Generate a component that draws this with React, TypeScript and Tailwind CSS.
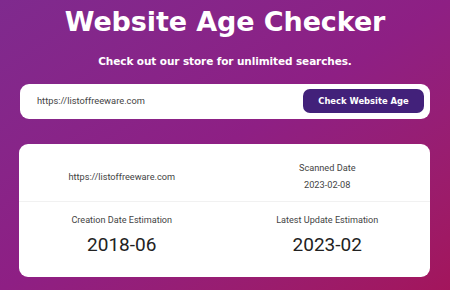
export default function App() {
  return (
    <div className="w-[450px] h-[290px] overflow-hidden bg-gradient-to-br from-[#7f2a8e] via-[#8e1f84] to-[#a3155c] px-[20px] [font-family:Roboto,sans-serif]">
      <h1 className="text-center text-white text-[27px] font-bold leading-none pt-[8px] tracking-[-0.1px] [font-family:'DejaVu_Sans',sans-serif]">
        Website Age Checker
      </h1>
      <p className="text-center text-white text-[10.5px] font-bold mt-[21px] leading-none tracking-[-0.1px] [font-family:'DejaVu_Sans',sans-serif]">
        Check out our store for unlimited searches.
      </p>

      <div className="mt-[17px] h-[35px] bg-white rounded-[9px] flex items-center justify-between pl-[17px] pr-[6px]">
        <span className="text-[9.3px] text-[#444]">https://listoffreeware.com</span>
        <button className="h-[24px] w-[121px] rounded-[7px] bg-[#42217a] text-white text-[8.4px] font-bold [font-family:'DejaVu_Sans',sans-serif]">
          Check Website Age
        </button>
      </div>

      <div className="mt-[25px] -ml-[1px] h-[133px] bg-white rounded-[9px] flex flex-col text-[#444]">
        <div className="h-[58px] grid grid-cols-2 border-b border-[#f1f1f1]">
          <div className="flex items-center justify-center text-[9.2px] pt-[10px]">https://listoffreeware.com</div>
          <div className="flex flex-col items-center justify-center text-[9.2px] gap-[7px] pt-[8px]">
            <span className="leading-none">Scanned Date</span>
            <span className="leading-none">2023-02-08</span>
          </div>
        </div>
        <div className="grid grid-cols-2 pt-[14px]">
          <div className="flex flex-col items-center">
            <span className="text-[9.1px] leading-none">Creation Date Estimation</span>
            <span className="text-[19px] text-[#222] mt-[10px] leading-none">2018-06</span>
          </div>
          <div className="flex flex-col items-center">
            <span className="text-[9.1px] leading-none">Latest Update Estimation</span>
            <span className="text-[19px] text-[#222] mt-[10px] leading-none">2023-02</span>
          </div>
        </div>
      </div>
    </div>
  );
}
